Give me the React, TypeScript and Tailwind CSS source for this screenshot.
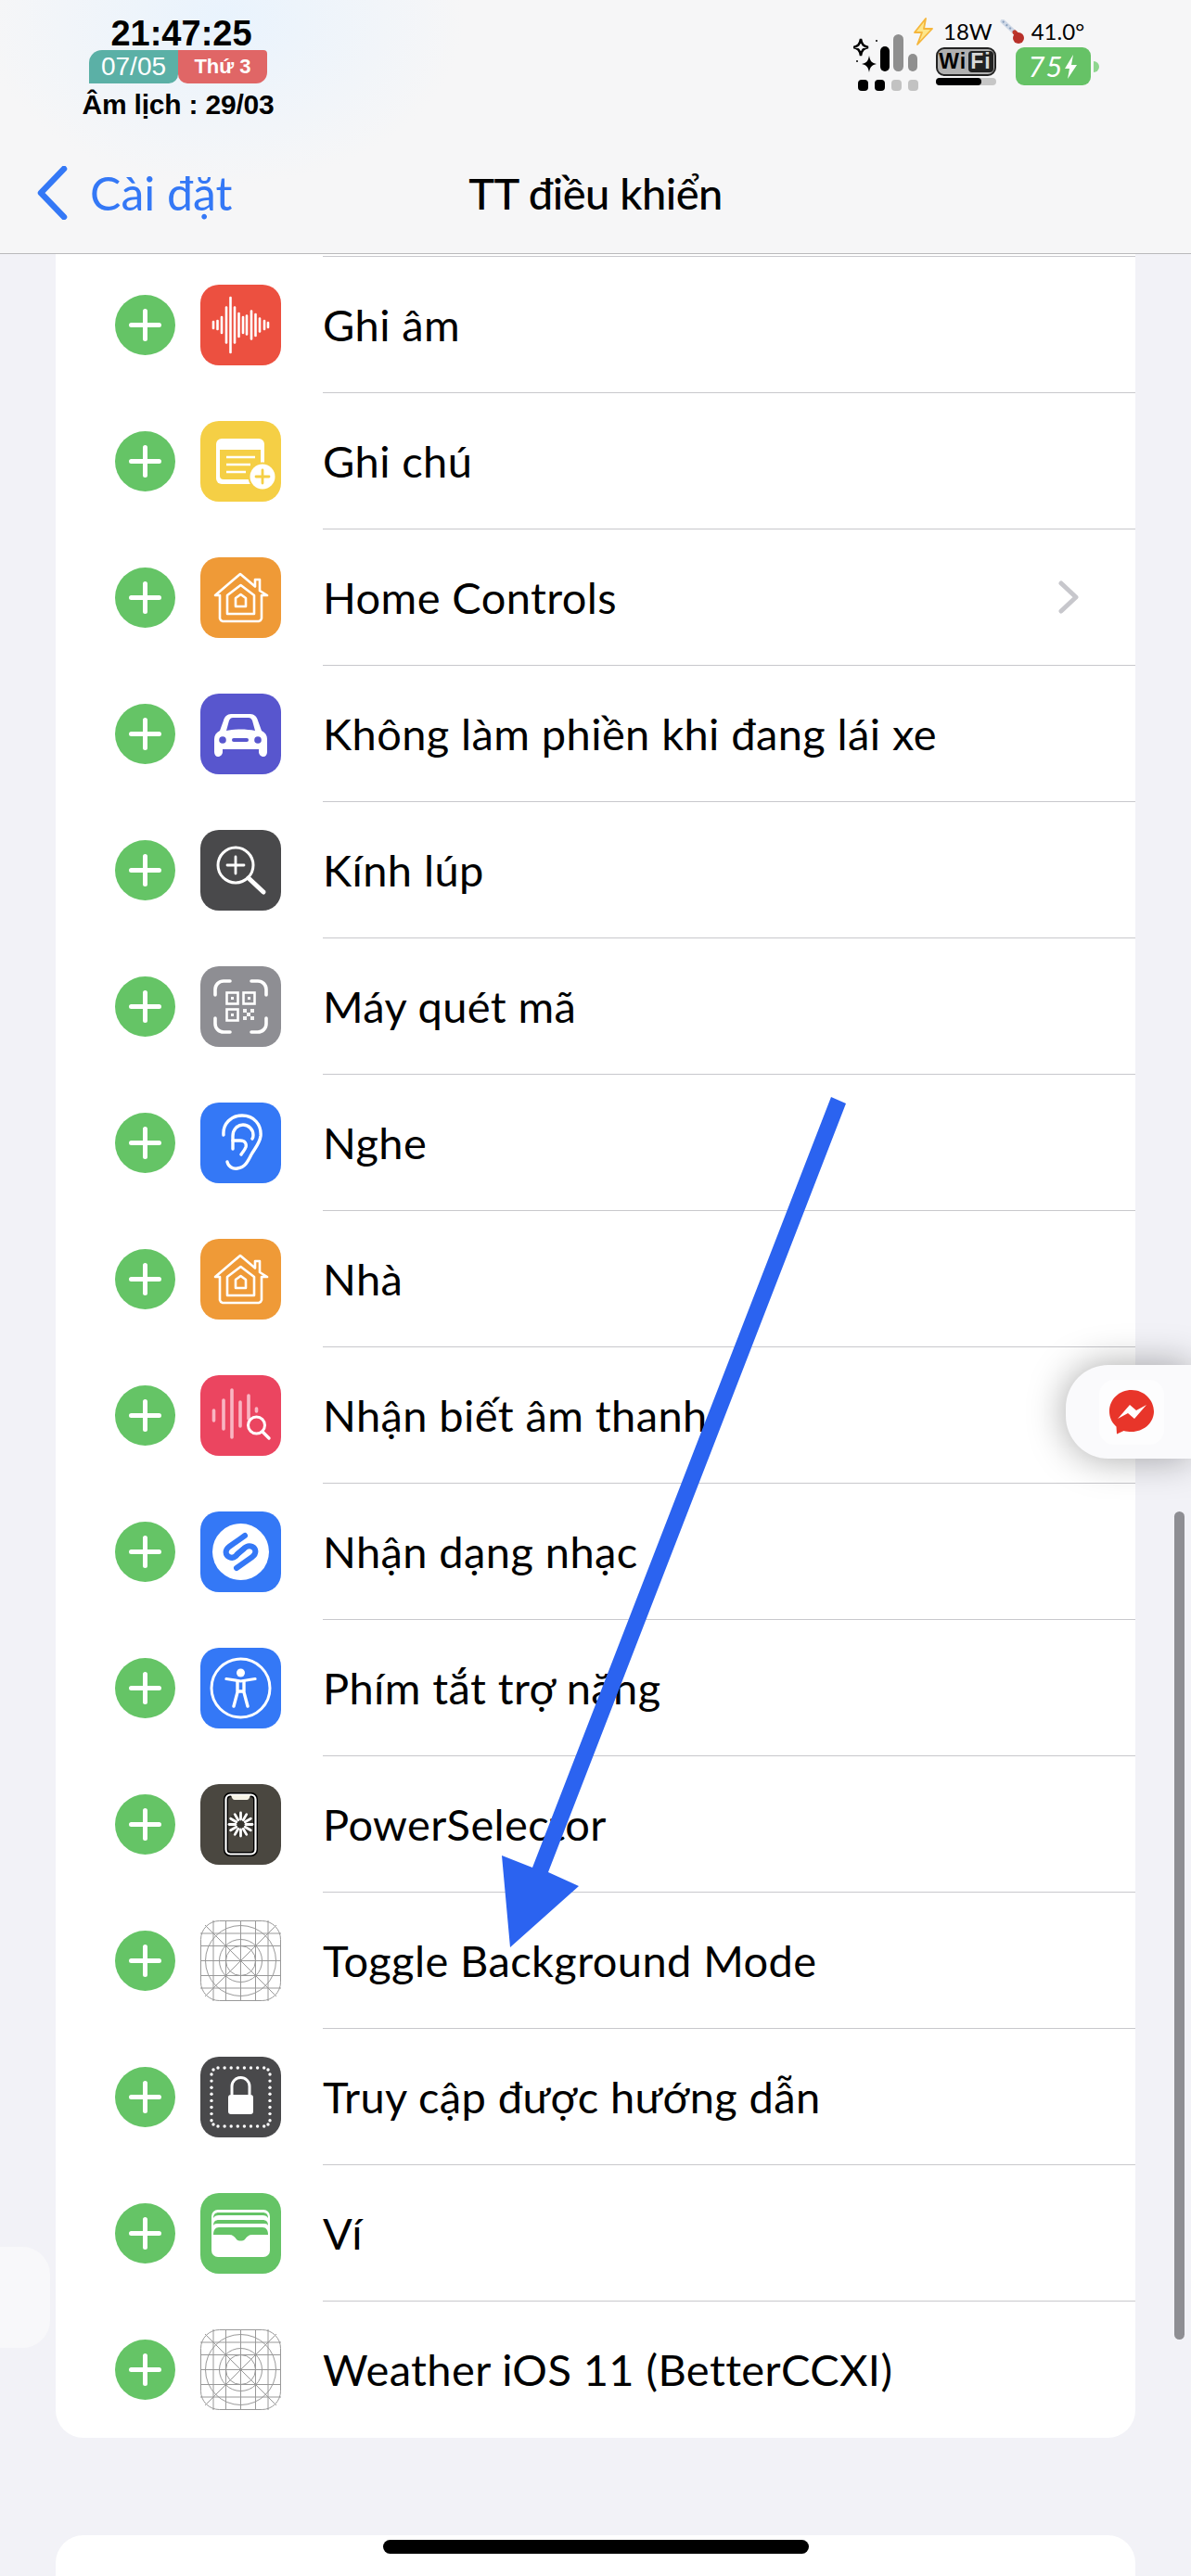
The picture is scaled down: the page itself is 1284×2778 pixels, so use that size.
import React from 'react';

const rounded = 'block shrink-0';

const VoiceMemoIcon = () => {
  const bars = [
    [14, 7], [18.5, 9], [23, 17], [28, 38], [32.5, 59], [37, 38], [41.5, 25], [46, 17],
    [50, 20], [55, 30], [59.5, 23], [64, 14], [69, 9], [73, 5],
  ];
  return (
    <svg width="87" height="87" viewBox="0 0 87 87" className={rounded}>
      <rect width="87" height="87" rx="20" fill="#ec5040" />
      {bars.map(([x, h]) => (
        <line key={x} x1={x} x2={x} y1={43.5 - h / 2} y2={43.5 + h / 2} stroke="#fff" strokeWidth="2.6" strokeLinecap="round" />
      ))}
    </svg>
  );
};

const NotesIcon = () => (
  <svg width="87" height="87" viewBox="0 0 87 87" className={rounded}>
    <rect width="87" height="87" rx="20" fill="#f5cf45" />
    <rect x="17" y="19" width="52" height="49" rx="6" fill="#fff" />
    <path d="M21 31h44v27l-7 5H25a4 4 0 0 1-4-4z" fill="#f5cf45" />
    <path d="M28 39h31M28 47h26M28 55h21" stroke="#fff" strokeWidth="2.6" />
    <circle cx="67" cy="60" r="15.5" fill="#f5cf45" />
    <circle cx="67" cy="60" r="13.5" fill="#fff" />
    <path d="M67 53v14M60 60h14" stroke="#f5cf45" strokeWidth="2.8" strokeLinecap="round" />
  </svg>
);

const HomeIcon = () => (
  <svg width="87" height="87" viewBox="0 0 87 87" className={rounded}>
    <rect width="87" height="87" rx="20" fill="#ef9a37" />
    <g fill="none" stroke="#fff" strokeWidth="2.6" strokeLinejoin="round">
      <path d="M16 41 43 18l16 13.500V24h5v12l8 5h-6v25a4 4 0 0 1-3 3H24a4 4 0 0 1-3-3V41z" />
      <path d="M29 61V41l14.500-11L58 41v20z" />
      <path d="M38 53V44l5.500-4 5.500 4v9z" />
    </g>
  </svg>
);

const CarIcon = () => (
  <svg width="87" height="87" viewBox="0 0 87 87" className={rounded}>
    <rect width="87" height="87" rx="20" fill="#5856ce" />
    <path d="M25 29c1-4 4-7 8-7h21c4 0 7 3 8 7l4 11c4 2 6 5 6 9v14c0 3-2 5-4 5s-5-2-5-5v-3H24v3c0 3-3 5-5 5s-4-2-4-5V49c0-4 2-7 6-9z" fill="#fff" />
    <path d="M28 40l3-11c1-2 2-3 4-3h17c2 0 3 1 4 3l3 11c-10-2-21-2-31 0z" fill="#5856ce" />
    <circle cx="24" cy="50" r="3.800" fill="#5856ce" />
    <circle cx="62" cy="50" r="3.800" fill="#5856ce" />
    <rect x="34" y="48" width="18" height="4" rx="2" fill="#5856ce" />
  </svg>
);

const MagnifierIcon = () => (
  <svg width="87" height="87" viewBox="0 0 87 87" className={rounded}>
    <rect width="87" height="87" rx="20" fill="#49494b" />
    <circle cx="38" cy="38" r="19" fill="none" stroke="#fff" strokeWidth="3" />
    <path d="M38 29v18M29 38h18" stroke="#fff" strokeWidth="2.800" strokeLinecap="round" />
    <path d="M52 52l16 15" stroke="#fff" strokeWidth="5" strokeLinecap="round" />
  </svg>
);

const QrIcon = () => (
  <svg width="87" height="87" viewBox="0 0 87 87" className={rounded}>
    <rect width="87" height="87" rx="20" fill="#8e8e93" />
    <g fill="none" stroke="#fff" strokeWidth="3.600" strokeLinecap="round">
      <path d="M16 31v-6a9 9 0 0 1 9-9h7M55 16h7a9 9 0 0 1 9 9v6M71 56v6a9 9 0 0 1-9 9h-7M32 71h-7a9 9 0 0 1-9-9v-6" />
    </g>
    <g fill="none" stroke="#fff" strokeWidth="2.600">
      <rect x="28.500" y="28.500" width="12" height="12" />
      <rect x="46.500" y="28.500" width="12" height="12" />
      <rect x="28.500" y="46.500" width="12" height="12" />
    </g>
    <path d="M33 33h3v3h-3zM51 33h3v3h-3zM33 51h3v3h-3z" fill="#fff" />
    <path d="M46 46h4v4h-4zM54 46h4v4h-4zM50 50h4v4h-4zM46 54h4v4h-4zM54 54h4v4h-4z" fill="#fff" opacity="0.9" />
  </svg>
);

const EarIcon = () => (
  <svg width="87" height="87" viewBox="0 0 87 87" className={rounded}>
    <rect width="87" height="87" rx="20" fill="#3478f6" />
    <g fill="none" stroke="#fff" strokeWidth="3.400" strokeLinecap="round" strokeLinejoin="round">
      <path d="M25 35c-1-12 8-21 20-21 13 0 21 10 20 22-1 8-6 13-10 20-4 8-7 14-15 15-5 1-10-2-11-7" />
      <path d="M35 50V36c0-7 5-12 11-12s11 5 11 11c0 2 0 3-1 4" />
      <path d="M35 41h8c5 0 7 3 6 7-1 3-3 5-5 8" />
    </g>
  </svg>
);

const SoundIcon = () => (
  <svg width="87" height="87" viewBox="0 0 87 87" className={rounded}>
    <rect width="87" height="87" rx="20" fill="#eb4560" />
    <g stroke="#f9b5c2" strokeWidth="3.600" strokeLinecap="round">
      <path d="M14.500 38v11M25 27v31M34 16v51M43 29v26M52 22v25M60.500 36v3" />
    </g>
    <circle cx="60.500" cy="54" r="9" fill="#eb4560" stroke="#fff" strokeWidth="3" />
    <path d="M67 61l7 7" stroke="#fff" strokeWidth="3.400" strokeLinecap="round" />
  </svg>
);

const ShazamIcon = () => (
  <svg width="87" height="87" viewBox="0 0 87 87" className={rounded}>
    <rect width="87" height="87" rx="20" fill="#3478f6" />
    <circle cx="43.500" cy="43.500" r="30.500" fill="#fff" />
    <g fill="none" stroke="#3478f6" strokeWidth="6" strokeLinecap="round" strokeLinejoin="round">
      <path d="M48 26 31 38c-5 4-4 9 0 11 4 2 7 0 9-3l7-6" />
      <path d="M39 61l17-12c5-4 4-9 0-11-4-2-7 0-9 2l-7 6" />
    </g>
  </svg>
);

const AccessibilityIcon = () => (
  <svg width="87" height="87" viewBox="0 0 87 87" className={rounded}>
    <rect width="87" height="87" rx="20" fill="#3478f6" />
    <circle cx="43.500" cy="43.500" r="31.500" fill="none" stroke="#fff" strokeWidth="3" />
    <circle cx="43.500" cy="27" r="4.500" fill="#fff" />
    <path d="M28 33.500 43.500 36l15.500-2.500" fill="none" stroke="#fff" strokeWidth="3.200" strokeLinecap="round" />
    <path d="M40 36v12l-4 15M47 36v12l4 15M40 47h7" fill="none" stroke="#fff" strokeWidth="3.400" strokeLinecap="round" />
  </svg>
);

const PowerSelectorIcon = () => (
  <svg width="87" height="87" viewBox="0 0 87 87" className={rounded}>
    <rect width="87" height="87" rx="20" fill="#4a4740" />
    <rect x="25" y="9" width="37" height="69" rx="7" fill="#000" />
    <rect x="27.500" y="11.500" width="32" height="64" rx="5" fill="none" stroke="#fff" strokeWidth="2.200" />
    <rect x="30" y="14" width="27" height="59" rx="3" fill="#4a4740" />
    <path d="M33 12h21c-1 3-2 5-4 5H37c-2 0-3-2-4-5z" fill="#f6f3e6" />
    <circle cx="43.500" cy="43.500" r="13.500" fill="#000" opacity="0.25" />
    {Array.from({ length: 12 }, (_, i) => (
      <line
        key={i}
        x1="43.500"
        y1="38"
        x2="43.500"
        y2="31"
        stroke="#fff"
        strokeWidth="2.800"
        strokeLinecap="round"
        transform={`rotate(${i * 30} 43.5 43.5)`}
      />
    ))}
  </svg>
);

const PlaceholderIcon = () => (
  <svg width="87" height="87" viewBox="0 0 87 87" className={rounded}>
    <g fill="none" stroke="#999999" strokeWidth="1">
      <rect x="0.500" y="0.500" width="86" height="86" rx="20" />
      <path d="M14 0v87M27.500 0v87M43.500 0v87M59.500 0v87M73 0v87M0 14h87M0 27.500h87M0 43.500h87M0 59.500h87M0 73h87" />
      <path d="M5 5l77 77M82 5 5 82" />
      <circle cx="43.500" cy="43.500" r="38" />
      <circle cx="43.500" cy="43.500" r="23" />
      <circle cx="43.500" cy="43.500" r="16" />
    </g>
  </svg>
);

const GuidedAccessIcon = () => {
  const dots: [number, number][] = [];
  for (let i = 0; i < 8; i++) {
    const p = 19 + i * 7.1;
    dots.push([p, 12], [p, 75], [12, p], [75, p]);
  }
  dots.push([14, 14], [73, 14], [14, 73], [73, 73]);
  return (
    <svg width="87" height="87" viewBox="0 0 87 87" className={rounded}>
      <rect width="87" height="87" rx="20" fill="#49494b" />
      {dots.map(([x, y], i) => (
        <circle key={i} cx={x} cy={y} r="1.700" fill="#fff" />
      ))}
      <path d="M34 41v-9a9.500 9.500 0 0 1 19 0v9" fill="none" stroke="#fff" strokeWidth="3" />
      <rect x="30" y="41" width="27" height="21" rx="3" fill="#fff" />
    </svg>
  );
};

const WalletIcon = () => (
  <svg width="87" height="87" viewBox="0 0 87 87" className={rounded}>
    <rect width="87" height="87" rx="20" fill="#65c466" />
    <rect x="12" y="18" width="63" height="51" rx="7" fill="#fff" />
    <path d="M14 27c0-4 2-6 6-6h47c4 0 6 2 6 6-1-2-3-3-6-3H20c-3 0-5 1-6 3z" fill="#65c466" />
    <path d="M14 35c0-4 2-6 6-6h47c4 0 6 2 6 6-1-2-3-2-6-2H20c-3 0-5 0-6 2z" fill="#65c466" />
    <path d="M14 45c0-5 2-8 6-8h47c4 0 6 3 6 8H56c-4 0-6 2-8 5-2 2-7 2-9 0-2-3-4-5-8-5z" fill="#65c466" />
  </svg>
);

type Item = { label: string; icon: React.ReactNode; chevron?: boolean };

const items: Item[] = [
  { label: 'Ghi âm', icon: <VoiceMemoIcon /> },
  { label: 'Ghi chú', icon: <NotesIcon /> },
  { label: 'Home Controls', icon: <HomeIcon />, chevron: true },
  { label: 'Không làm phiền khi đang lái xe', icon: <CarIcon /> },
  { label: 'Kính lúp', icon: <MagnifierIcon /> },
  { label: 'Máy quét mã', icon: <QrIcon /> },
  { label: 'Nghe', icon: <EarIcon /> },
  { label: 'Nhà', icon: <HomeIcon /> },
  { label: 'Nhận biết âm thanh', icon: <SoundIcon /> },
  { label: 'Nhận dạng nhạc', icon: <ShazamIcon /> },
  { label: 'Phím tắt trợ năng', icon: <AccessibilityIcon /> },
  { label: 'PowerSelector', icon: <PowerSelectorIcon /> },
  { label: 'Toggle Background Mode', icon: <PlaceholderIcon /> },
  { label: 'Truy cập được hướng dẫn', icon: <GuidedAccessIcon /> },
  { label: 'Ví', icon: <WalletIcon /> },
  { label: 'Weather iOS 11 (BetterCCXI)', icon: <PlaceholderIcon /> },
];

const Row = ({ item, last }: { item: Item; last: boolean }) => (
  <div className="flex h-[147px] items-stretch pl-[64px]">
    <div className="flex items-center gap-[27px] pr-[45px]">
      <svg width="65" height="65" viewBox="0 0 65 65" className="block shrink-0">
        <circle cx="32.5" cy="32.5" r="32.5" fill="#65c466" />
        <path d="M32.500 17.500v30M17.500 32.500h30" stroke="#fff" strokeWidth="5" strokeLinecap="round" />
      </svg>
      {item.icon}
    </div>
    <div className={`flex flex-1 items-center justify-between pr-[61px] ${last ? '' : 'border-b border-[#c8c8cc]'}`}>
      <span className="text-[47px] leading-none tracking-[0.4px] text-black">{item.label}</span>
      {item.chevron && (
        <svg width="22" height="36" viewBox="0 0 22 36" fill="none" className="block">
          <path d="M3 3l16 15L3 33" stroke="#c7c7cc" strokeWidth="5" strokeLinecap="round" strokeLinejoin="round" />
        </svg>
      )}
    </div>
  </div>
);

const StatusLeft = () => (
  <div className="flex w-[208px] flex-col items-center font-['Liberation_Sans',sans-serif] text-black">
    <div className="ml-[7px] text-[38px] font-bold leading-[36px]">21:47:25</div>
    <div className="flex h-[36px] w-[192px]">
      <div className="flex w-1/2 items-center justify-center rounded-tl-[14px] rounded-br-[10px] bg-[#5bb0a6] text-[28px] leading-none text-white">07/05</div>
      <div className="flex w-1/2 items-center justify-center rounded-tr-[4px] rounded-br-[12px] rounded-bl-[10px] bg-[#e06666] text-[22px] font-bold leading-none text-white">Thứ 3</div>
    </div>
    <div className="mt-[7px] whitespace-nowrap text-[30px] font-bold leading-[32px] tracking-[-0.2px]">Âm lịch : 29/03</div>
  </div>
);

const SignalCluster = () => (
  <svg width="72" height="64" viewBox="0 0 72 64" className="block">
    <path d="M8 0c1 6 3 8 8 9-5 1-7 3-8 9-1-6-3-8-8-9 5-1 7-3 8-9z" transform="translate(0 5)" fill="none" stroke="#000" strokeWidth="2.500" />
    <path d="M17 0c1 6 3 8 8 9-5 1-7 3-8 9-1-6-3-8-8-9 5-1 7-3 8-9z" transform="translate(0 23)" fill="#000" />
    <circle cx="25" cy="7" r="1" fill="#000" />
    <circle cx="4" cy="29" r="1" fill="#000" />
    <rect x="29" y="13" width="10" height="27" rx="5" fill="#000" />
    <rect x="43" y="0" width="11" height="40" rx="5.500" fill="#8f8f8f" />
    <rect x="59" y="21" width="10" height="19" rx="5" fill="#8f8f8f" />
    <rect x="5" y="49" width="11" height="12" rx="4" fill="#000" />
    <rect x="23" y="49" width="11" height="12" rx="4" fill="#000" />
    <rect x="41" y="49" width="11" height="12" rx="4" fill="#c2c2c2" />
    <rect x="59" y="49" width="11" height="12" rx="4" fill="#c2c2c2" />
  </svg>
);

const StatusRight = () => (
  <div className="flex items-start font-['Lato',sans-serif] text-black">
    <div className="mt-[19px]">
      <SignalCluster />
    </div>
    <div className="ml-[-8px] flex flex-col">
      <div className="flex h-[32px] items-center">
        <svg width="23" height="30" viewBox="0 0 23 30" className="block">
          <path d="M14 1 2 16h8l-5 13 16-17h-9z" fill="#fde68a" stroke="#f5b63c" strokeWidth="1.800" strokeLinejoin="round" />
        </svg>
        <span className="ml-[10px] text-[24px] leading-none">18W</span>
        <svg width="27" height="27" viewBox="0 0 27 27" className="ml-[8px] block">
          <path d="M3 2l14 13" stroke="#cfd8e6" strokeWidth="5" strokeLinecap="round" />
          <path d="M3 2l14 13" stroke="#8aa0bd" strokeWidth="2" strokeDasharray="2 3" />
          <path d="M16 14l4 4" stroke="#c0392b" strokeWidth="5" strokeLinecap="round" />
          <circle cx="20" cy="20" r="6" fill="#b8302a" />
        </svg>
        <span className="ml-[7px] text-[24px] leading-none">41.0°</span>
      </div>
      <div className="mt-[1px] flex items-start">
        <div className="ml-[25px] flex w-[65px] flex-col">
          <div className="flex h-[31px] items-center justify-center rounded-[9px] border-2 border-[#222] bg-[#b0b0b0] font-['Liberation_Sans',sans-serif] text-[23px] font-bold leading-none tracking-[1px]">
            Wi<span className="ml-[2px] rounded-[4px] bg-[#222] px-[2px] text-[#d8d8d8]">Fi</span>
          </div>
          <div className="mt-[2px] h-[8px] w-full rounded-full bg-[#c6c6c6]">
            <div className="h-full w-3/4 rounded-full bg-black" />
          </div>
        </div>
        <div className="ml-[21px] flex items-center">
          <div className="flex h-[41px] w-[81px] items-center justify-center rounded-[9px] bg-[#66c266] text-[31px] italic leading-none tracking-[1px] text-white">
            75
            <svg width="15" height="26" viewBox="0 0 15 26" className="ml-[1px] block">
              <path d="M10 0 1 15h5l-2 11 10-15H8z" fill="#fff" />
            </svg>
          </div>
          <div className="ml-[3px] h-[12px] w-[6px] rounded-r-full bg-[#8fd68f]" />
        </div>
      </div>
    </div>
  </div>
);

export default function App() {
  return (
    <div className="relative flex h-[2778px] w-[1284px] flex-col overflow-hidden bg-[#f2f2f7] font-['Lato',sans-serif]">
      <header className="h-[274px] shrink-0 border-b border-[#b9b9bb] bg-[#f6f6f7] bg-[radial-gradient(ellipse_260px_180px_at_240px_20px,#e9f3fd,transparent)]">
        <div className="flex h-[158px] items-start justify-between pl-[88px] pr-[99px] pt-[18px]">
          <StatusLeft />
          <StatusRight />
        </div>
        <nav className="grid h-[100px] grid-cols-3 items-center">
          <div className="flex items-center gap-[24px] pl-[40px]">
            <svg width="33" height="58" viewBox="0 0 33 58" fill="none" className="block">
              <path d="M29 3 4 29l25 26" stroke="#3478f6" strokeWidth="6.500" strokeLinecap="round" strokeLinejoin="round" />
            </svg>
            <span className="whitespace-nowrap text-[50px] leading-none text-[#3478f6]">Cài đặt</span>
          </div>
          <div className="whitespace-nowrap text-center text-[47px] font-medium leading-none tracking-[-0.5px] text-black">TT điều khiển</div>
          <div />
        </nav>
      </header>

      <main className="flex-1 overflow-hidden px-[60px]">
        <section className="rounded-b-[30px] bg-white">
          <div className="ml-[288px] h-[3px] border-b border-[#c8c8cc]" />
          {items.map((item, i) => (
            <Row key={item.label} item={item} last={i === items.length - 1} />
          ))}
        </section>
        <section className="mt-[105px] h-[60px] rounded-t-[30px] bg-white" />
      </main>

      {/* scroll indicator, floating buttons and the drawn arrow sit on top of the list */}
      <div className="absolute left-[1266px] top-[1630px] h-[893px] w-[11px] rounded-full bg-[#8e8e93]" />
      <div className="absolute left-0 top-[2423px] h-[109px] w-[54px] rounded-r-[30px] bg-[#f8f8fa]" />
      <div className="absolute left-[1149px] top-[1472px] flex h-[101px] w-[135px] items-center rounded-l-[46px] bg-[#fafafc] pl-[36px] shadow-[0_0_40px_rgba(0,0,0,0.35)]">
        <div className="flex h-[70px] w-[70px] items-center justify-center rounded-[16px] bg-[#fdfdfe]">
          <svg width="50" height="50" viewBox="0 0 50 50" className="block">
            <path d="M25 1C11.500 1 1 11 1 24c0 7 3 12.500 7.500 16.500l.5 8 7.500-3.500c2.500.7 5.500 1 8.500 1 13.500 0 24-10 24-22S38.500 1 25 1z" fill="#e8352a" />
            <path d="M10 32l13-15 7 6 11-6-13 15-7-6z" fill="#fff" />
          </svg>
        </div>
      </div>
      <div className="absolute left-[413px] top-[2739px] h-[15px] w-[459px] rounded-full bg-black" />
      <svg width="1284" height="2778" viewBox="0 0 1284 2778" className="pointer-events-none absolute left-0 top-0">
        <polygon points="896,1183 912,1190 591,2019 624,2034 550,2100 541,2001 574,2014" fill="#2b63f0" />
      </svg>
    </div>
  );
}
